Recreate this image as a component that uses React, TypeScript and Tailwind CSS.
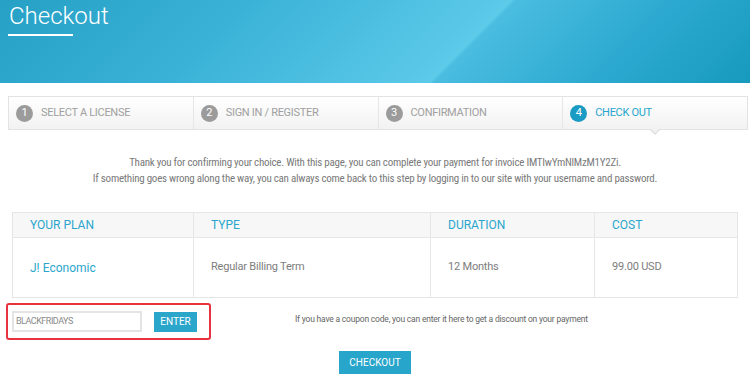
const steps = [
  { n: 1, label: 'SELECT A LICENSE' },
  { n: 2, label: 'SIGN IN / REGISTER' },
  { n: 3, label: 'CONFIRMATION' },
  { n: 4, label: 'CHECK OUT', active: true },
];

const cols = [
  { title: 'YOUR PLAN', value: 'J! Economic', w: 'w-[180px]', blue: true },
  { title: 'TYPE', value: 'Regular Billing Term', w: 'w-[237px]' },
  { title: 'DURATION', value: '12 Months', w: 'w-[164px]' },
  { title: 'COST', value: '99.00 USD', w: 'flex-1' },
];

export default function App() {
  return (
    <div className="w-[750px] h-[383px] overflow-hidden bg-white font-['Roboto',sans-serif]">
      <header className="relative h-[83px] bg-[linear-gradient(135deg,#27a0c6_0%,#3ab2d7_30%,#5ccae9_61.5%,#4abde0_62%,#2eaad1_80%,#169abd_100%)]">
        <h1 className="pl-[9px] pt-[2px] text-[24px] leading-[28px] font-light text-white">Checkout</h1>
        <div className="ml-[8px] mt-[4px] h-[2px] w-[65px] bg-white" />
      </header>

      <nav className="relative ml-[8px] mt-[13px] flex h-[34px] w-[740px] border border-[#e3e3e3] bg-[linear-gradient(to_bottom,#ffffff,#f2f2f2)]">
        {steps.map((s, i) => (
          <div
            key={s.n}
            className={`relative flex flex-1 items-center gap-[8px] pl-[7px] ${i > 0 ? 'border-l border-[#e6e6e6]' : ''}`}
          >
            <span
              className={`flex h-[17px] w-[17px] items-center justify-center rounded-full text-[11px] text-white ${s.active ? 'bg-[#1a9bc4]' : 'bg-[#9b9b9b]'}`}
            >
              {s.n}
            </span>
            <span className={`text-[11px] tracking-[-0.3px] ${s.active ? 'text-[#25a5cd]' : 'text-[#a0a0a0]'}`}>{s.label}</span>
            {s.active && (
              <span className="absolute left-1/2 top-full -translate-x-1/2">
                <span className="absolute left-[-6px] top-0 h-0 w-0 border-x-[6px] border-t-[6px] border-x-transparent border-t-[#e0e0e0]" />
                <span className="absolute left-[-5px] top-[-1px] h-0 w-0 border-x-[5px] border-t-[5px] border-x-transparent border-t-[#f2f2f2]" />
              </span>
            )}
          </div>
        ))}
      </nav>

      <div className="mt-[25px] text-center text-[11px] leading-[16px] tracking-[-0.25px] text-[#7a7a7a] font-['Liberation_Sans_Narrow','Roboto_Condensed',sans-serif]">
        <p>Thank you for confirming your choice. With this page, you can complete your payment for invoice IMTIwYmNlMzM1Y2Zi.</p>
        <p>If something goes wrong along the way, you can always come back to this step by logging in to our site with your username and password.</p>
      </div>

      <div className="ml-[12px] mt-[25px] flex w-[726px] border border-[#e6e6e6]">
        {cols.map((c, i) => (
          <div key={c.title} className={`${c.w} ${i > 0 ? 'border-l border-[#e6e6e6]' : ''} flex flex-col`}>
            <div className="flex h-[25px] items-center border-b border-[#e6e6e6] bg-[#f7f7f7] pl-[17px] text-[12px] text-[#2aa6cd]">
              {c.title}
            </div>
            <div
              className={`flex h-[59px] items-center pl-[17px] ${c.blue ? 'text-[12px] text-[#2aa6cd]' : 'text-[11px] tracking-[-0.2px] text-[#7d7d7d]'}`}
            >
              {c.value}
            </div>
          </div>
        ))}
      </div>

      <div className="mt-[5px] flex items-center">
        <div className="ml-[6px] flex h-[37px] w-[205px] items-center gap-[12px] rounded-[3px] border-2 border-[#e8333f] pl-[4px]">
          <div className="flex h-[21px] w-[130px] items-center border-2 border-[#e4e4e4] pl-[2px] text-[9px] tracking-[-0.5px] text-[#8a8a8a]">
            BLACKFRIDAYS
          </div>
          <button className="h-[20px] w-[43px] bg-[#2aa6cb] text-[10px] text-white">ENTER</button>
        </div>
        <p className="ml-[84px] mt-[-5px] text-[8.5px] tracking-[-0.2px] text-[#666]">
          If you have a coupon code, you can enter it here to get a discount on your payment
        </p>
      </div>

      <div className="mt-[11px] flex justify-center">
        <button className="h-[23px] w-[72px] bg-[#28a5cb] text-[10px] text-white">CHECKOUT</button>
      </div>
    </div>
  );
}
